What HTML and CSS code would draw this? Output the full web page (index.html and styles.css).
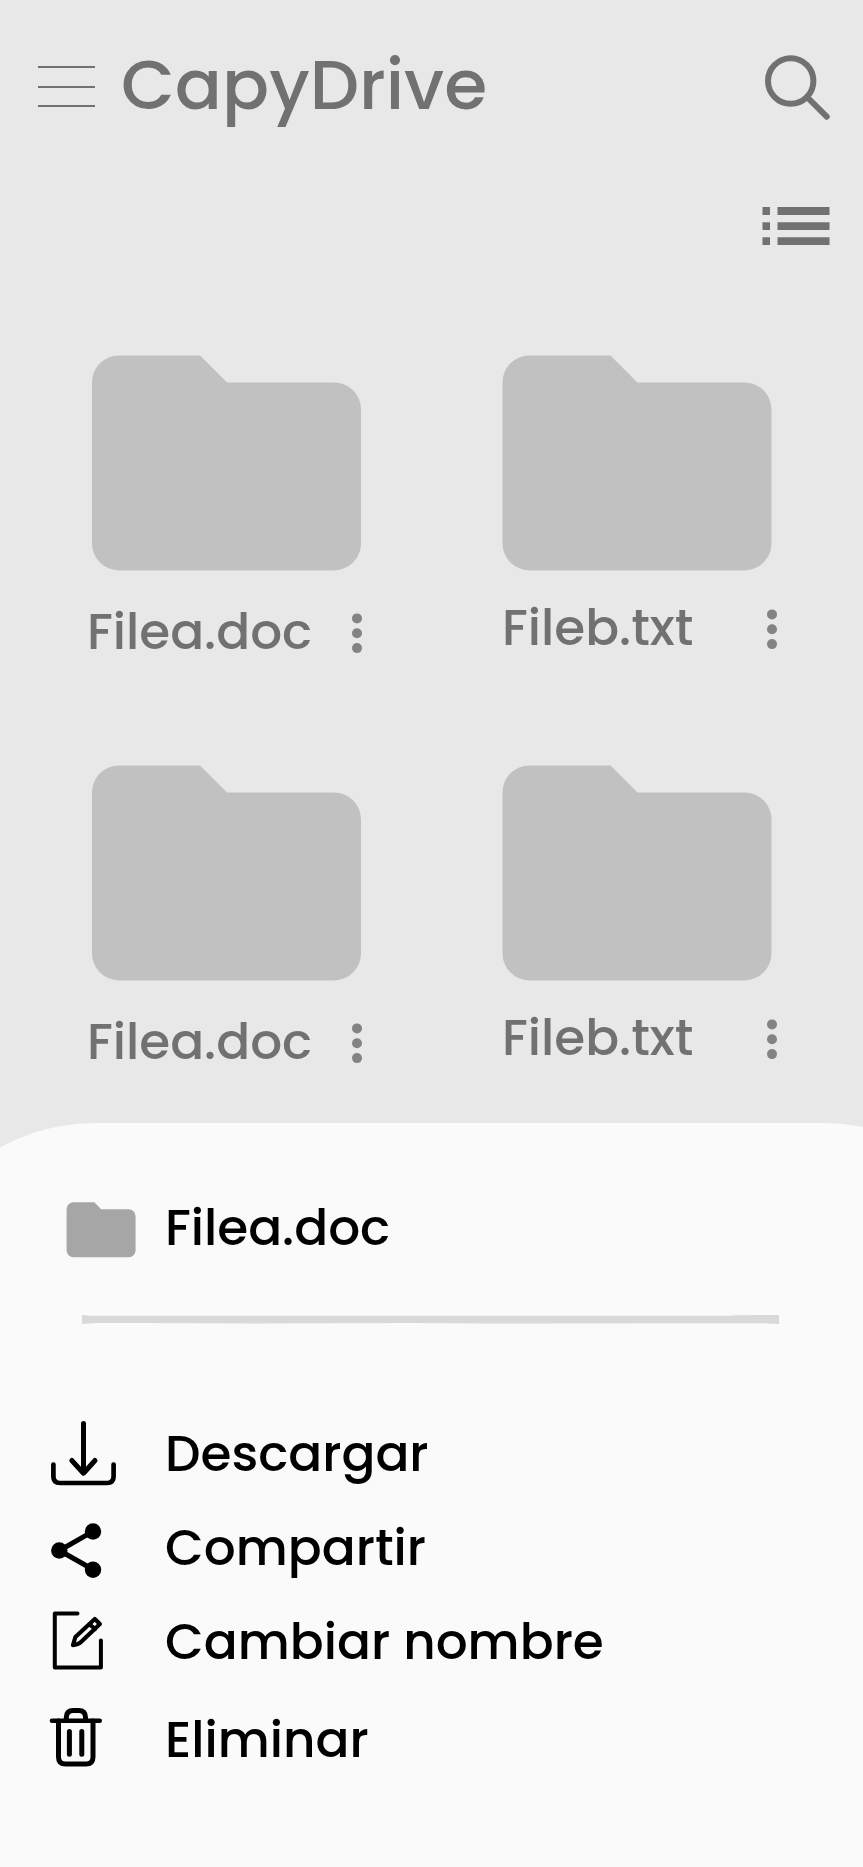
FILE: index.html
```html
<!DOCTYPE html>
<html lang="es">
<head>
<meta charset="utf-8">
<title>CapyDrive</title>
<link rel="stylesheet" href="styles.css">
</head>
<body>
<svg width="0" height="0" class="defs">
  <defs>
    <path id="folder" d="M27 0H108L135 27H242A27 27 0 0 1 269 54V188A27 27 0 0 1 242 215H27A27 27 0 0 1 0 188V27A27 27 0 0 1 27 0Z"/>
    <g id="dots"><circle cx="5" cy="5" r="5"/><circle cx="5" cy="19.8" r="5"/><circle cx="5" cy="34.7" r="5"/></g>
  </defs>
</svg>
<div class="screen">
  <header class="header">
    <div class="menu"><span></span><span></span><span></span></div>
    <h1 class="title">CapyDrive</h1>
    <svg class="search" width="66" height="66" viewBox="0 0 66 66"><circle cx="26.7" cy="29" r="22.7"/><path d="M43.5 45.5L62.7 64.7"/></svg>
  </header>
  <div class="toolbar">
    <svg width="68" height="38" viewBox="0 0 68 38"><path d="M.5 0H8V8H.5ZM15.5 0H67.5V8H15.5ZM.5 15.2H8V23H.5ZM15.5 15.2H67.5V23H15.5ZM.5 30.2H8V38H.5ZM15.5 30.2H67.5V38H15.5Z"/></svg>
  </div>
  <main class="files">
    <article class="file">
      <svg class="folder" viewBox="0 -.4 270 216"><use href="#folder"/></svg>
      <div class="row row-doc"><span class="name">Filea.doc</span><svg class="dots" viewBox="0 -.4 10 42"><use href="#dots"/></svg></div>
    </article>
    <article class="file">
      <svg class="folder" viewBox="-.5 -.4 270 216"><use href="#folder"/></svg>
      <div class="row row-txt"><span class="name">Fileb.txt</span><svg class="dots" viewBox="0 -.4 10 42"><use href="#dots"/></svg></div>
    </article>
    <article class="file">
      <svg class="folder" viewBox="0 -.4 270 216"><use href="#folder"/></svg>
      <div class="row row-doc"><span class="name">Filea.doc</span><svg class="dots" viewBox="0 -.4 10 42"><use href="#dots"/></svg></div>
    </article>
    <article class="file">
      <svg class="folder" viewBox="-.5 -.4 270 216"><use href="#folder"/></svg>
      <div class="row row-txt"><span class="name">Fileb.txt</span><svg class="dots" viewBox="0 -.4 10 42"><use href="#dots"/></svg></div>
    </article>
  </main>
  <section class="sheet">
    <div class="sheet-head"><svg class="folder-small" viewBox="-2.3 -.9 273 218.4"><use href="#folder"/></svg><span class="name">Filea.doc</span></div>
    <svg class="divider" width="697" height="9" viewBox="0 0 697 9"><path d="M0 0L8 .8H22L650 .7L652 .2L697 0V9L680 8.2L400 8.5L330 8L170 8.5L60 8L16 8L0 9Z"/></svg>
    <ul class="actions">
      <li class="action">
        <svg class="icon" width="76" height="94" viewBox="45 1407 76 94"><path d="M83.5 1423.5V1472M71.8 1460.5L83.5 1473.2L95 1460.5" stroke-width="5"/><path d="M53.4 1464.5V1476.5Q53.4 1483 60 1483H107Q113.6 1483 113.6 1476.5V1464.5" stroke-width="4.7"/></svg>
        <span class="label">Descargar</span>
      </li>
      <li class="action">
        <svg class="icon" width="76" height="94" viewBox="45 1501 76 94"><path d="M93 1531.3L59.5 1550.5L93 1569.5" stroke-width="5"/><g class="solid"><circle cx="93" cy="1531.5" r="8.2"/><circle cx="59.3" cy="1550.5" r="8.2"/><circle cx="93" cy="1569.7" r="8.2"/></g></svg>
        <span class="label">Compartir</span>
      </li>
      <li class="action">
        <svg class="icon" width="76" height="94" viewBox="45 1595 76 94"><path d="M77.5 1613.5H54.8V1667.4H100.9V1640.5" stroke-width="4"/><path d="M73 1645.2L75.4 1637L94.8 1619L99.9 1624L81 1642Q78 1644.8 73 1645.2ZM89.3 1624L95 1629" stroke-width="4.2"/></svg>
        <span class="label">Cambiar nombre</span>
      </li>
      <li class="action last">
        <svg class="icon" width="76" height="94" viewBox="45 1693 76 94"><path d="M52 1720.8H99.7" stroke-width="4.6"/><path d="M66.3 1720V1717.5Q66.3 1710.5 73.3 1710.5H78.5Q85.5 1710.5 85.5 1717.5V1720M58.5 1721V1757Q58.5 1764 65.5 1764H86Q93 1764 93 1757V1721M69.4 1731.5V1754.2M81.8 1731.5V1754.2" stroke-width="5"/></svg>
        <span class="label">Eliminar</span>
      </li>
    </ul>
  </section>
</div>
</body>
</html>
```
FILE: styles.css
```css
* { box-sizing: border-box; }
body {
  margin: 0;
  background: #e8e8e8;
  font-family: Poppins, Inter, "Liberation Sans", sans-serif;
  font-weight: 500;
}
svg { display: block; flex: none; }
.defs { position: absolute; }
.screen {
  width: 863px;
  height: 1867px;
  overflow: hidden;
  display: flex;
  flex-direction: column;
  color: #717171;
}
.header {
  height: 170px;
  padding: 0 33.5px 0 38px;
  display: flex;
  align-items: center;
}
.menu {
  width: 57px;
  height: 41px;
  margin-top: 3px;
  display: flex;
  flex-direction: column;
  justify-content: space-between;
}
.menu span { height: 2px; background: #717171; }
.title {
  margin: 0 auto 0 26px;
  font-size: 69.6px;
  line-height: 80px;
  font-weight: 500;
  white-space: nowrap;
}
.search {
  overflow: visible;
  fill: none;
  stroke: #717171;
  stroke-width: 6;
  stroke-linecap: round;
}
.toolbar {
  height: 185px;
  padding: 37px 33px 0 0;
  display: flex;
  justify-content: flex-end;
  fill: #717171;
}
.files {
  height: 768px;
  padding-left: 92px;
  display: grid;
  grid-template-columns: 410px 300px;
  grid-template-rows: 410px 358px;
}
.folder { width: 270px; height: 216px; fill: #c1c1c1; }
.row {
  height: 60px;
  display: flex;
  align-items: center;
  justify-content: space-between;
}
.row-doc { margin: 31px 0 0 -5px; width: 275px; }
.row-txt { margin: 27px 0 0 0; width: 275px; }
.name, .label {
  font-size: 50.1px;
  line-height: 60px;
  white-space: nowrap;
}
.dots { width: 10px; height: 42px; margin-top: 4px; fill: #848282; }
.sheet {
  position: relative;
  isolation: isolate;
  height: 744px;
  color: #000;
}
/* The panel is wider than the screen, so its corners are cut by the edges */
.sheet::before {
  content: "";
  position: absolute;
  z-index: -1;
  top: 0;
  bottom: 0;
  left: -104px;
  right: -160px;
  background: #fafafa;
  border-radius: 200px 200px 0 0;
}
.sheet-head {
  height: 192px;
  padding: 18px 0 0 66px;
  display: flex;
  align-items: center;
  gap: 29px;
}
.folder-small { width: 70px; height: 56px; margin-top: 4px; fill: #a6a6a6; }
.divider { margin-left: 82px; fill: #d9d9d9; }
.actions {
  margin: 0;
  padding: 83px 0 0 45px;
  list-style: none;
}
.action { height: 94px; display: flex; align-items: center; gap: 44px; }
.last { margin-top: 4px; }
.icon { fill: none; stroke: #000; stroke-linecap: round; stroke-linejoin: round; }
.solid { fill: #000; stroke: none; }
```
